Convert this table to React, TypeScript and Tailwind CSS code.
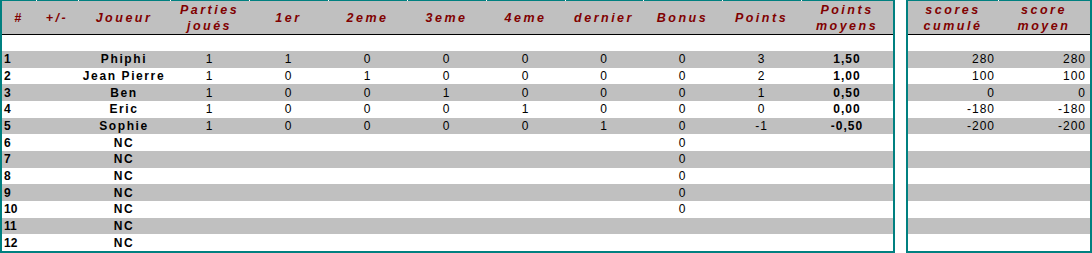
import React from 'react'

const TEAL = 'bg-[#008080]'

// column widths of the main table (inner width 891px)
const leftCols = [
  'w-[34px]',
  'w-[42px]',
  'w-[92px]',
  'w-[79px]',
  'w-[79px]',
  'w-[79px]',
  'w-[79px]',
  'w-[79px]',
  'w-[78px]',
  'w-[79px]',
  'w-[79px]',
  'w-[92px]',
]
const rightCols = ['w-[90px]', 'w-[92px]']

const leftHeaders: string[][] = [
  ['#'],
  ['+/-'],
  ['Joueur'],
  ['Parties', 'joués'],
  ['1er'],
  ['2eme'],
  ['3eme'],
  ['4eme'],
  ['dernier'],
  ['Bonus'],
  ['Points'],
  ['Points', 'moyens'],
]
const rightHeaders: string[][] = [
  ['scores', 'cumulé'],
  ['score', 'moyen'],
]

interface Row {
  name: string
  stats: string[] // parties, 1er, 2eme, 3eme, 4eme, dernier, bonus, points
  avg: string
  scores: string[]
}

const rows: Row[] = [
  { name: 'Phiphi', stats: ['1', '1', '0', '0', '0', '0', '0', '3'], avg: '1,50', scores: ['280', '280'] },
  { name: 'Jean Pierre', stats: ['1', '0', '1', '0', '0', '0', '0', '2'], avg: '1,00', scores: ['100', '100'] },
  { name: 'Ben', stats: ['1', '0', '0', '1', '0', '0', '0', '1'], avg: '0,50', scores: ['0', '0'] },
  { name: 'Eric', stats: ['1', '0', '0', '0', '1', '0', '0', '0'], avg: '0,00', scores: ['-180', '-180'] },
  { name: 'Sophie', stats: ['1', '0', '0', '0', '0', '1', '0', '-1'], avg: '-0,50', scores: ['-200', '-200'] },
  { name: 'NC', stats: ['', '', '', '', '', '', '0', ''], avg: '', scores: ['', ''] },
  { name: 'NC', stats: ['', '', '', '', '', '', '0', ''], avg: '', scores: ['', ''] },
  { name: 'NC', stats: ['', '', '', '', '', '', '0', ''], avg: '', scores: ['', ''] },
  { name: 'NC', stats: ['', '', '', '', '', '', '0', ''], avg: '', scores: ['', ''] },
  { name: 'NC', stats: ['', '', '', '', '', '', '0', ''], avg: '', scores: ['', ''] },
  { name: 'NC', stats: ['', '', '', '', '', '', '', ''], avg: '', scores: ['', ''] },
  { name: 'NC', stats: ['', '', '', '', '', '', '', ''], avg: '', scores: ['', ''] },
]

function TopLine({ cols }: { cols: string[] }) {
  // teal top border with small white ticks at the column boundaries
  return (
    <div className="flex h-px shrink-0">
      {cols.map((w, i) => (
        <div key={i} className={`${w} h-px ${TEAL} ${i > 0 ? 'border-l border-white' : ''}`} />
      ))}
    </div>
  )
}

function Header({ cols, labels }: { cols: string[]; labels: string[][] }) {
  return (
    <div className="flex h-[33px] shrink-0 bg-[#c0c0c0]">
      {cols.map((w, i) => (
        <div
          key={i}
          className={`${w} flex flex-col items-center justify-center leading-[16px] text-[12.5px] font-bold italic tracking-[2.5px] text-[#800000]`}
        >
          {labels[i].map((l, j) => (
            <span key={j}>{l}</span>
          ))}
        </div>
      ))}
    </div>
  )
}

function Table({
  cols,
  children,
  labels,
}: {
  cols: string[]
  labels: string[][]
  children: React.ReactNode
}) {
  return (
    <div className="flex flex-col h-[253px] border-x-2 border-b-2 border-[#008080]">
      <TopLine cols={cols} />
      <Header cols={cols} labels={labels} />
      <div className="h-px shrink-0 bg-black" />
      <div className="h-[16px] shrink-0 bg-white" />
      <div className="flex flex-col h-[200px] shrink-0">{children}</div>
    </div>
  )
}

export default function App() {
  return (
    <div className="flex w-[1092px] h-[253px] overflow-hidden bg-white font-['Liberation_Sans',Arial,sans-serif] text-black">
      <Table cols={leftCols} labels={leftHeaders}>
        {rows.map((r, i) => (
          <div
            key={i}
            className={`flex flex-1 min-h-0 items-center text-[12px] leading-[14px] ${i % 2 === 0 ? 'bg-[#c0c0c0]' : 'bg-white'}`}
          >
            <div className={`${leftCols[0]} pl-[2px] font-bold`}>{i + 1}</div>
            <div className={leftCols[1]} />
            <div className={`${leftCols[2]} text-center font-bold tracking-[1.6px]`}>{r.name}</div>
            {r.stats.map((s, j) => (
              <div key={j} className={`${leftCols[j + 3]} text-center tracking-[1px]`}>
                {s}
              </div>
            ))}
            <div className={`${leftCols[11]} text-center font-bold tracking-[1px]`}>{r.avg}</div>
          </div>
        ))}
      </Table>
      <div className="w-[11px] shrink-0" />
      <Table cols={rightCols} labels={rightHeaders}>
        {rows.map((r, i) => (
          <div
            key={i}
            className={`flex flex-1 min-h-0 items-center text-[12px] leading-[14px] ${i % 2 === 0 ? 'bg-[#c0c0c0]' : 'bg-white'}`}
          >
            <div className={`${rightCols[0]} text-right pr-[3px] tracking-[1px]`}>{r.scores[0]}</div>
            <div className={`${rightCols[1]} text-right pr-[4px] tracking-[1px]`}>{r.scores[1]}</div>
          </div>
        ))}
      </Table>
    </div>
  )
}
